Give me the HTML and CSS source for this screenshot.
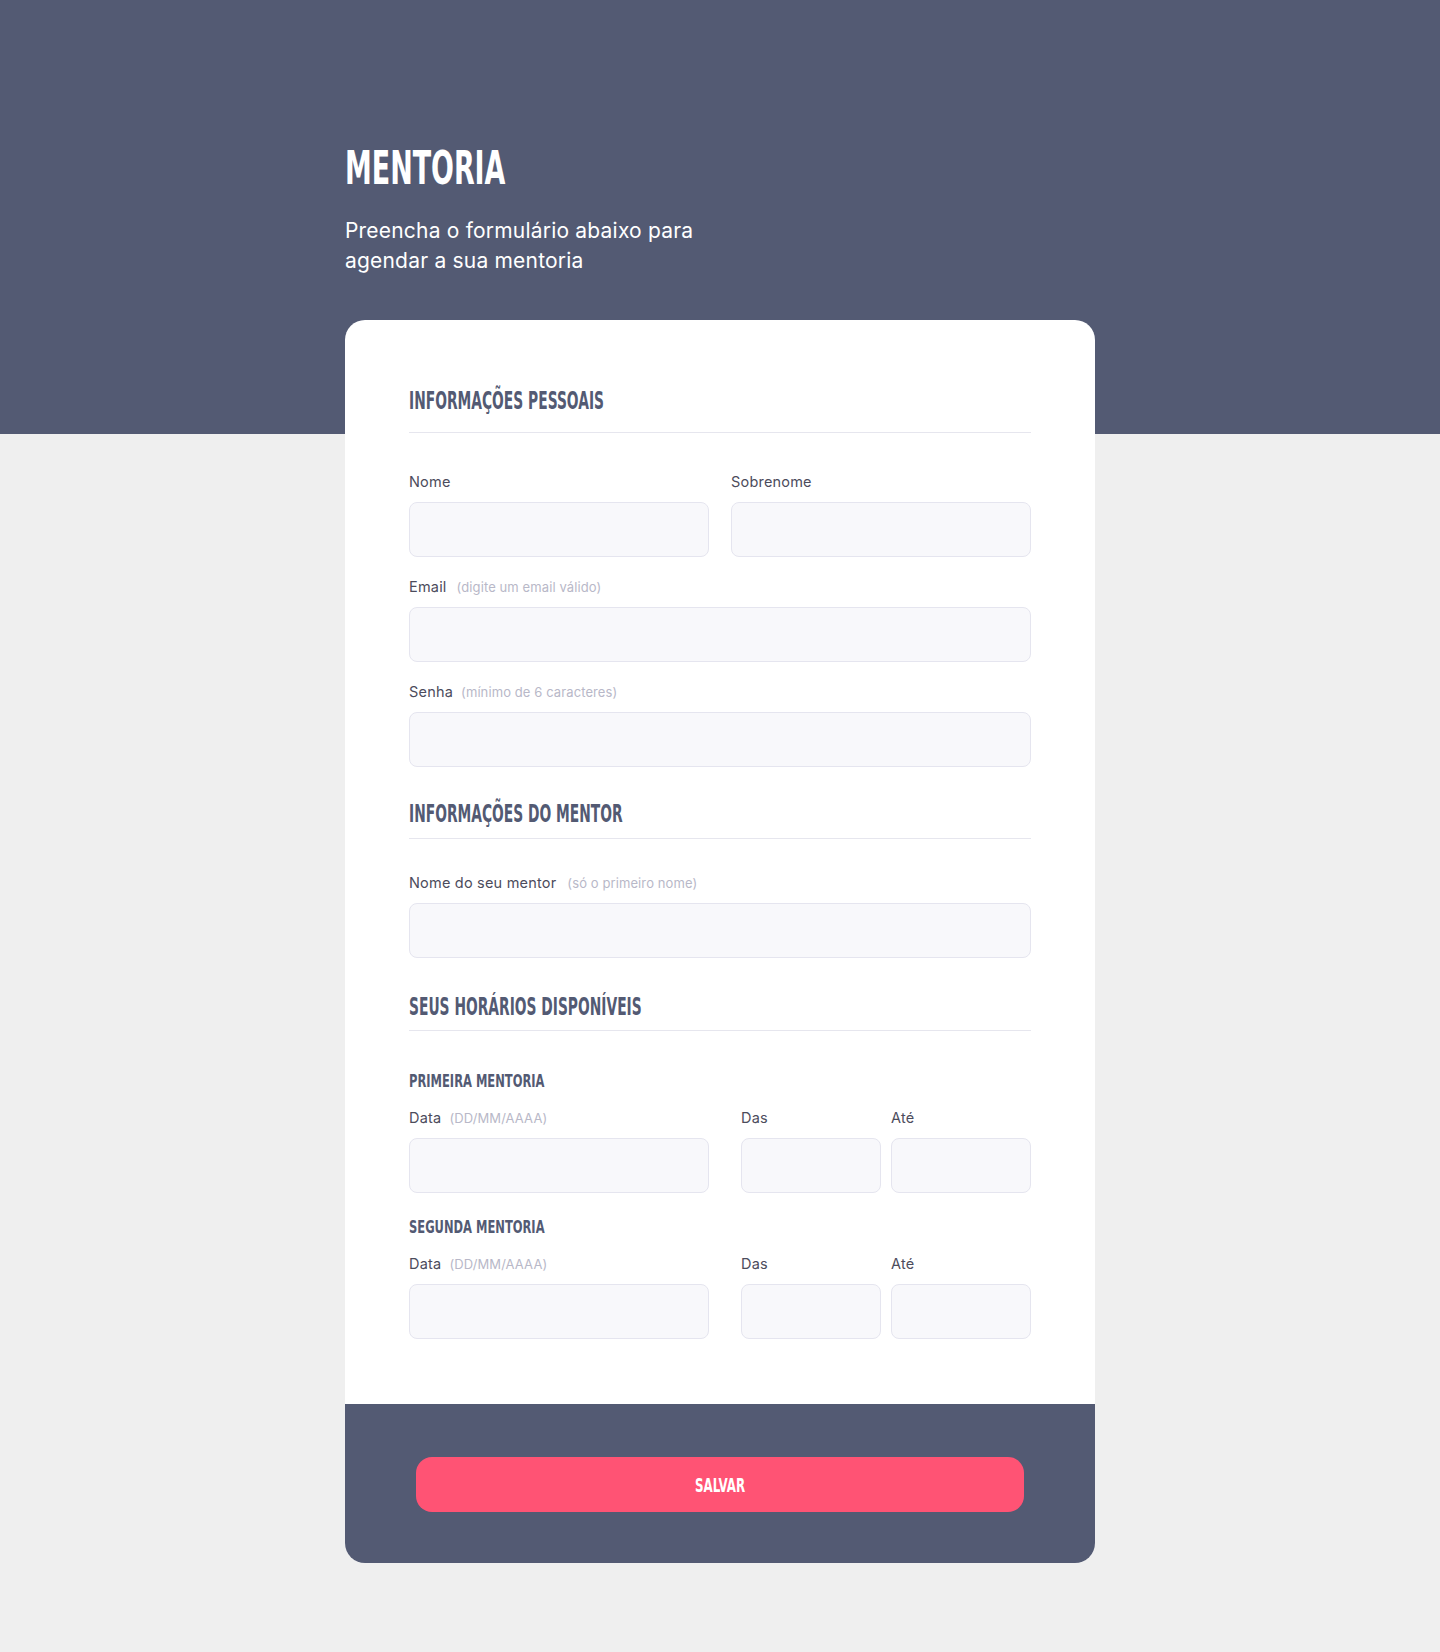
FILE: index.html
```html
<!DOCTYPE html>
<html lang="pt-BR">
<head>
<meta charset="utf-8">
<title>Mentoria</title>
<link rel="stylesheet" href="styles.css">
</head>
<body>
<main class="page">
  <header class="intro">
    <h1 class="title"><span class="condensed condensed-title">MENTORIA</span></h1>
    <p class="lead">Preencha o formulário abaixo para<br>agendar a sua mentoria</p>
  </header>

  <form class="card">
    <div class="card-body">
      <section class="section section-personal">
        <h2 class="section-title"><span class="condensed">INFORMAÇÕES PESSOAIS</span></h2>
        <div class="row row-2">
          <div class="field">
            <label class="label">Nome</label>
            <input class="input" type="text">
          </div>
          <div class="field">
            <label class="label">Sobrenome</label>
            <input class="input" type="text">
          </div>
        </div>
        <div class="row">
          <div class="field">
            <label class="label">Email<span class="hint hint-email">(digite um email válido)</span></label>
            <input class="input" type="email">
          </div>
        </div>
        <div class="row">
          <div class="field">
            <label class="label">Senha<span class="hint">(mínimo de 6 caracteres)</span></label>
            <input class="input" type="password">
          </div>
        </div>
      </section>

      <section class="section section-mentor">
        <h2 class="section-title section-title-compact"><span class="condensed">INFORMAÇÕES DO MENTOR</span></h2>
        <div class="row">
          <div class="field">
            <label class="label">Nome do seu mentor<span class="hint hint-wide">(só o primeiro nome)</span></label>
            <input class="input" type="text">
          </div>
        </div>
      </section>

      <section class="section section-times">
        <h2 class="section-title section-title-compact"><span class="condensed">SEUS HORÁRIOS DISPONÍVEIS</span></h2>

        <div class="slot slot-first">
          <h3 class="slot-title"><span class="condensed condensed-slot">PRIMEIRA MENTORIA</span></h3>
          <div class="row row-time">
            <div class="field field-date">
              <label class="label">Data<span class="hint">(DD/MM/AAAA)</span></label>
              <input class="input" type="text">
            </div>
            <div class="field">
              <label class="label">Das</label>
              <input class="input" type="text">
            </div>
            <div class="field">
              <label class="label">Até</label>
              <input class="input" type="text">
            </div>
          </div>
        </div>

        <div class="slot slot-second">
          <h3 class="slot-title"><span class="condensed condensed-slot">SEGUNDA MENTORIA</span></h3>
          <div class="row row-time">
            <div class="field field-date">
              <label class="label">Data<span class="hint">(DD/MM/AAAA)</span></label>
              <input class="input" type="text">
            </div>
            <div class="field">
              <label class="label">Das</label>
              <input class="input" type="text">
            </div>
            <div class="field">
              <label class="label">Até</label>
              <input class="input" type="text">
            </div>
          </div>
        </div>
      </section>
    </div>

    <div class="card-footer">
      <button class="btn" type="button"><span class="condensed condensed-btn">SALVAR</span></button>
    </div>
  </form>
</main>
</body>
</html>
```

FILE: styles.css
```css
* {
  box-sizing: border-box;
}

html, body {
  margin: 0;
  padding: 0;
}

body {
  min-height: 1652px;
  background: linear-gradient(to bottom, #535a73 0, #535a73 434px, #efefef 434px, #efefef 100%);
  font-family: Inter, "Noto Sans", "Liberation Sans", sans-serif;
  color: #4c4c5c;
}

.page {
  width: 750px;
  margin: 0 auto;
  padding-top: 144px;
  padding-bottom: 89px;
}

.condensed {
  display: inline-block;
  transform: scaleX(0.64);
  transform-origin: left center;
  white-space: nowrap;
}

.condensed-title {
  transform: scaleX(0.65);
}

.condensed-slot {
  transform: scaleX(0.71);
}

.condensed-btn {
  transform: scaleX(0.66);
  transform-origin: center center;
}

.title {
  margin: 0;
  font-family: "Liberation Sans Narrow", "DejaVu Sans Condensed", "Liberation Sans", sans-serif;
  font-weight: 700;
  font-size: 46px;
  line-height: 48px;
  color: #ffffff;
}

.lead {
  margin: 24px 0 0;
  font-size: 21px;
  line-height: 30px;
  letter-spacing: 0.2px;
  font-weight: 400;
  color: #ffffff;
}

.card {
  margin-top: 44px;
  background: #ffffff;
  border-radius: 20px;
  overflow: hidden;
}

.card-body {
  padding: 67px 64px 65px;
}

.section-title {
  margin: 0 0 39px;
  padding-bottom: 17px;
  border-bottom: 1px solid #e6e6ee;
  font-family: "Liberation Sans Narrow", "DejaVu Sans Condensed", "Liberation Sans", sans-serif;
  font-weight: 700;
  font-size: 24px;
  line-height: 28px;
  color: #535a73;
}

.section-title-compact {
  padding-bottom: 10px;
}

.section-mentor {
  margin-top: 33px;
}

.section-mentor .section-title {
  margin-bottom: 34px;
}

.section-times {
  margin-top: 35px;
}

.section-times .section-title {
  padding-bottom: 9px;
}

.row {
  margin-bottom: 20px;
}

.section .row:last-child,
.slot .row:last-child {
  margin-bottom: 0;
}

.row-2 {
  display: grid;
  grid-template-columns: 1fr 1fr;
  column-gap: 22px;
}

.row-time {
  display: grid;
  grid-template-columns: 1fr 140px 140px;
  column-gap: 10px;
}

.field-date {
  margin-right: 22px;
}

.field {
  display: flex;
  flex-direction: column;
}

.label {
  display: block;
  height: 20px;
  margin-bottom: 10px;
  font-size: 14.5px;
  line-height: 20px;
  letter-spacing: 0.2px;
  color: #4c4c5c;
  white-space: nowrap;
}

.hint {
  margin-left: 8px;
  font-size: 13px;
  letter-spacing: 0.1px;
  color: #b8b8c8;
}

.hint-email {
  margin-left: 10px;
}

.hint-wide {
  margin-left: 11px;
}

.input {
  display: block;
  width: 100%;
  height: 55px;
  margin: 0;
  padding: 0 16px;
  background: #f8f8fb;
  border: 1px solid #e5e5ef;
  border-radius: 8px;
  font: inherit;
  outline: none;
}

.slot-title {
  margin: 0 0 16px;
  font-family: "Liberation Sans Narrow", "DejaVu Sans Condensed", "Liberation Sans", sans-serif;
  font-weight: 700;
  font-size: 18px;
  line-height: 22px;
  color: #535a73;
}

.slot-second {
  margin-top: 23px;
}

.card-footer {
  background: #535a73;
  padding: 53px 71px 51px;
}

.btn {
  display: flex;
  align-items: center;
  justify-content: center;
  width: 100%;
  height: 55px;
  border: none;
  border-radius: 16px;
  background: #ff5374;
  color: #ffffff;
  font-family: "Liberation Sans Narrow", "DejaVu Sans Condensed", "Liberation Sans", sans-serif;
  font-weight: 700;
  font-size: 20px;
  line-height: 24px;
  cursor: pointer;
}
```
